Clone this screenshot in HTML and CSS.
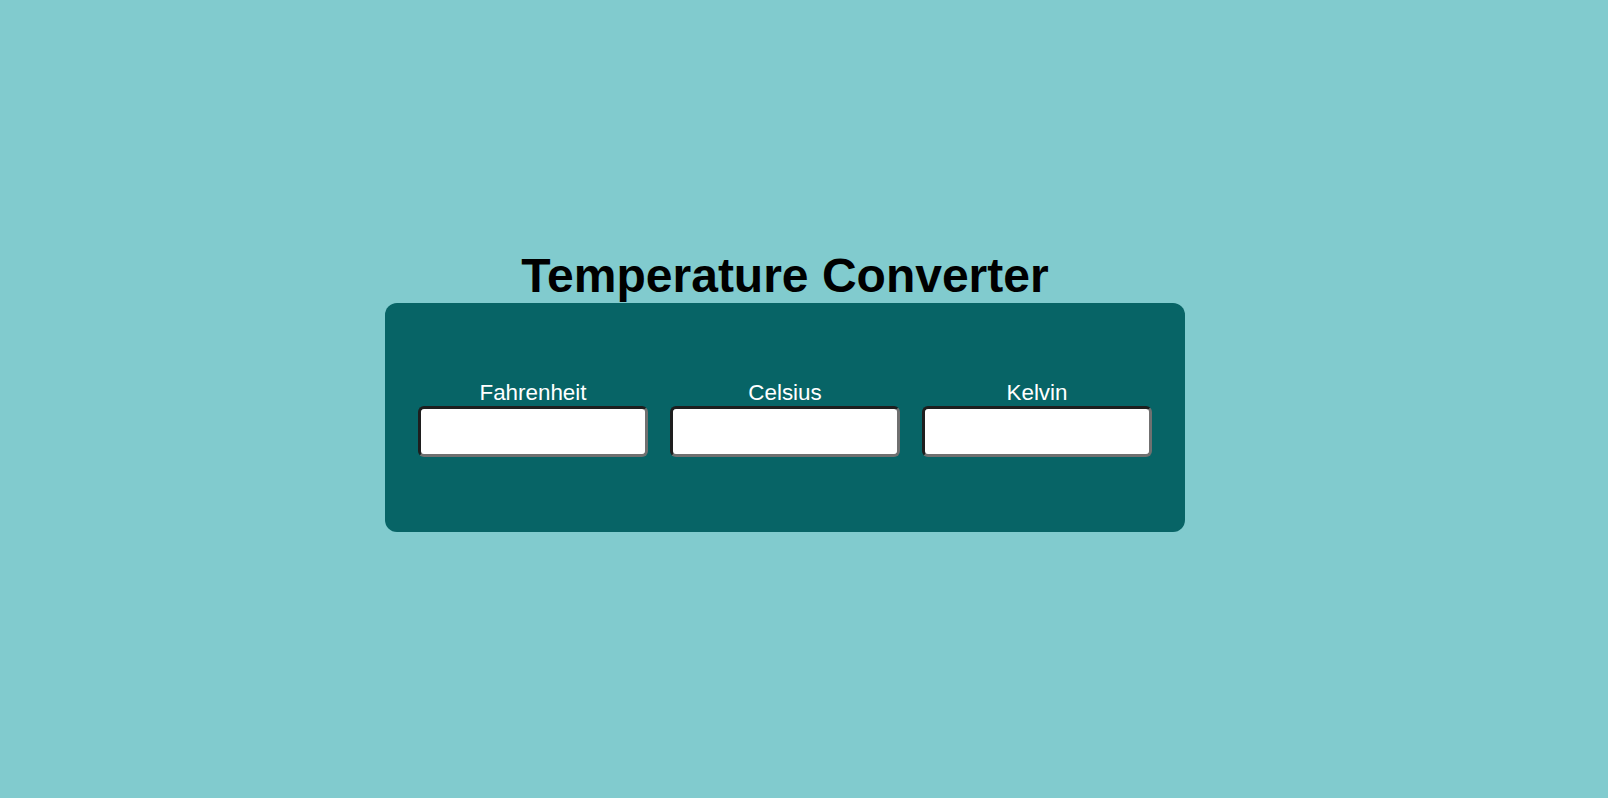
FILE: index.html
```html
<!DOCTYPE html>
<html lang="en">
<head>
<meta charset="utf-8">
<title>Temperature Converter</title>
<link rel="stylesheet" href="styles.css">
</head>
<body>
<main class="page">
  <h1 class="title">Temperature Converter</h1>
  <section class="panel">
    <div class="field">
      <label class="label" for="f">Fahrenheit</label>
      <input class="input" id="f" type="text">
    </div>
    <div class="field">
      <label class="label" for="c">Celsius</label>
      <input class="input" id="c" type="text">
    </div>
    <div class="field">
      <label class="label" for="k">Kelvin</label>
      <input class="input" id="k" type="text">
    </div>
  </section>
</main>
</body>
</html>
```
FILE: styles.css
```css
html, body {
  margin: 0;
  padding: 0;
}
body {
  background: #81cbce;
  font-family: "Liberation Sans", Arial, sans-serif;
  min-height: 798px;
}
.page {
  display: flex;
  flex-direction: column;
  align-items: center;
  padding: 248px 38px 0 0;
}
.title {
  margin: 0;
  font-size: 48px;
  line-height: 55px;
  font-weight: bold;
  color: #000;
}
.panel {
  box-sizing: border-box;
  width: 800px;
  height: 229px;
  padding: 77px 0 75px;
  background: #076466;
  border-radius: 12px;
  display: flex;
  justify-content: center;
  gap: 22px;
}
.field {
  display: flex;
  flex-direction: column;
  align-items: center;
}
.label {
  color: #fff;
  font-size: 22.4px;
  line-height: 25px;
  margin-bottom: 1px;
}
.input {
  box-sizing: border-box;
  width: 230px;
  height: 51px;
  margin: 0;
  padding: 0 8px;
  background: #fff;
  border: 3px solid;
  border-color: #1e1e1e #707070 #707070 #1e1e1e;
  border-radius: 6px;
  font-size: 20px;
  font-family: "Liberation Sans", Arial, sans-serif;
  outline: none;
}
```
